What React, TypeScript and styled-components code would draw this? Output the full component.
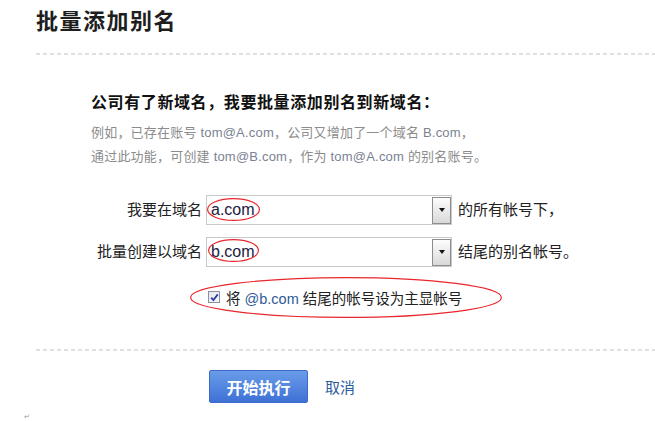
import React from "react";
import styled, { createGlobalStyle } from "styled-components";

const GlobalStyle = createGlobalStyle`
  html, body { margin: 0; padding: 0; background: #ffffff; }
  body { font-family: "Liberation Sans", "Noto Sans CJK SC", sans-serif; }
`;

const Page = styled.div`
  width: 655px;
  height: 421px;
  overflow: hidden;
  box-sizing: border-box;
  padding: 7px 0 0 36px;
`;

const Title = styled.h1`
  margin: 0;
  font-size: 22px;
  line-height: 30px;
  font-weight: bold;
  color: #1e1e1e;
  letter-spacing: 1.5px;
`;

const Divider = styled.div<{ $top: number }>`
  margin-top: ${(p) => p.$top}px;
  height: 2px;
  background: repeating-linear-gradient(to right, #e0e0e0 0 4px, transparent 4px 7px);
`;

const Content = styled.div`
  padding-left: 55px;
`;

const Subtitle = styled.h2`
  margin: 36px 0 0;
  font-size: 16px;
  line-height: 24px;
  font-weight: bold;
  color: #111;
  letter-spacing: 0.6px;
`;

const Desc = styled.p`
  margin: 6px 0 0;
  font-size: 13px;
  line-height: 24px;
  color: #8c8c8c;
  letter-spacing: 0.2px;
`;

const Latin = styled.span`
  color: #7a8292;
`;

const FormGrid = styled.div`
  margin-top: 26px;
  display: grid;
  grid-template-columns: 115px auto 1fr;
  row-gap: 12px;
  align-items: center;
`;

const Label = styled.div`
  padding-right: 4px;
  text-align: right;
  font-size: 15px;
  line-height: 30px;
  color: #222;
  white-space: nowrap;
`;

const SelectBox = styled.div`
  position: relative;
  width: 246px;
  height: 30px;
  box-sizing: border-box;
  margin-right: 6px;
  border: 1px solid #c9c9c9;
  background: #fff;
  display: flex;
  align-items: center;
  justify-content: space-between;
`;

const SelectValue = styled.span`
  padding-left: 4px;
  font-size: 16px;
  color: #202040;
`;

const DropButton = styled.span`
  width: 19px;
  height: 27px;
  box-sizing: border-box;
  border: 1px solid #8d8d8d;
  background: linear-gradient(#fdfdfd, #d9d9d9);
  display: flex;
  align-items: center;
  justify-content: center;
`;

const Arrow = styled.span`
  width: 0;
  height: 0;
  border-left: 3px solid transparent;
  border-right: 3px solid transparent;
  border-top: 4px solid #111;
`;

const Suffix = styled.div`
  font-size: 15px;
  line-height: 30px;
  color: #222;
  white-space: nowrap;
`;

const Ellipse = styled.svg<{ $l: number; $t: number }>`
  position: absolute;
  left: ${(p) => p.$l}px;
  top: ${(p) => p.$t}px;
  overflow: visible;
  pointer-events: none;
`;

const CheckRow = styled.div`
  position: relative;
  grid-column: 2 / 4;
  margin-top: 6px;
  margin-left: 2px;
  height: 24px;
  display: flex;
  align-items: center;
  gap: 6px;
  font-size: 14.5px;
  color: #222;
`;

const CheckBox = styled.span`
  width: 12px;
  height: 12px;
  box-sizing: border-box;
  border: 1px solid #8e8f9f;
  background: linear-gradient(135deg, #e4e6ee, #fafafa);
  display: flex;
  align-items: center;
  justify-content: center;
`;

const Domain = styled.span`
  color: #2f5a98;
`;

const Actions = styled.div`
  margin-top: 19px;
  padding-left: 173px;
  display: flex;
  align-items: center;
  gap: 17px;
`;

const PrimaryButton = styled.button`
  width: 99px;
  height: 33px;
  border: 1px solid #3b6cc9;
  border-radius: 2px;
  background: linear-gradient(#6a9ce9, #3e71d5);
  color: #fff;
  font-family: "Liberation Sans", "Noto Sans CJK SC", sans-serif;
  font-size: 16px;
  font-weight: bold;
  padding: 0;
`;

const CancelLink = styled.a`
  font-size: 15px;
  color: #2d5c9e;
  text-decoration: none;
`;

const Mark = styled.div`
  margin: 10px 0 0 -12px;
  font-size: 7px;
  line-height: 8px;
  color: #9a9a9a;
`;

function RedEllipse({ l, t, w, h }: { l: number; t: number; w: number; h: number }) {
  return (
    <Ellipse $l={l} $t={t} width={w} height={h} viewBox={`0 0 ${w} ${h}`}>
      <ellipse cx={w / 2} cy={h / 2} rx={w / 2 - 0.6} ry={h / 2 - 0.6} fill="none" stroke="#e8262c" strokeWidth="1.2" />
    </Ellipse>
  );
}

function Select({ value, ring }: { value: string; ring: { l: number; t: number; w: number; h: number } }) {
  return (
    <SelectBox>
      <SelectValue>{value}</SelectValue>
      <DropButton>
        <Arrow />
      </DropButton>
      <RedEllipse {...ring} />
    </SelectBox>
  );
}

export default function App() {
  return (
    <>
      <GlobalStyle />
      <Page>
        <Title>批量添加别名</Title>
        <Divider $top={16} />
        <Content>
          <Subtitle>公司有了新域名，我要批量添加别名到新域名：</Subtitle>
          <Desc>
            例如，已存在账号 <Latin>tom@A.com</Latin>，公司又增加了一个域名 <Latin>B.com</Latin>，
            <br />
            通过此功能，可创建 <Latin>tom@B.com</Latin>，作为 <Latin>tom@A.com</Latin> 的别名账号。
          </Desc>
          <FormGrid>
            <Label>我要在域名</Label>
            <Select value="a.com" ring={{ l: 0, t: 2, w: 53, h: 23 }} />
            <Suffix>的所有帐号下，</Suffix>
            <Label>批量创建以域名</Label>
            <Select value="b.com" ring={{ l: 1, t: 1, w: 51, h: 23 }} />
            <Suffix>结尾的别名帐号。</Suffix>
            <CheckRow>
              <CheckBox>
                <svg width="9" height="9" viewBox="0 0 9 9">
                  <path d="M1.2 4.6 L3.4 7 L7.8 1.4" fill="none" stroke="#2a3ea8" strokeWidth="1.8" />
                </svg>
              </CheckBox>
              <span>
                将 <Domain>@b.com</Domain> 结尾的帐号设为主显帐号
              </span>
              <RedEllipse l={-18} t={-8} w={312} h={41} />
            </CheckRow>
          </FormGrid>
        </Content>
        <Divider $top={40} />
        <Actions>
          <PrimaryButton>开始执行</PrimaryButton>
          <CancelLink href="#">取消</CancelLink>
        </Actions>
        <Mark>↵</Mark>
      </Page>
    </>
  );
}
